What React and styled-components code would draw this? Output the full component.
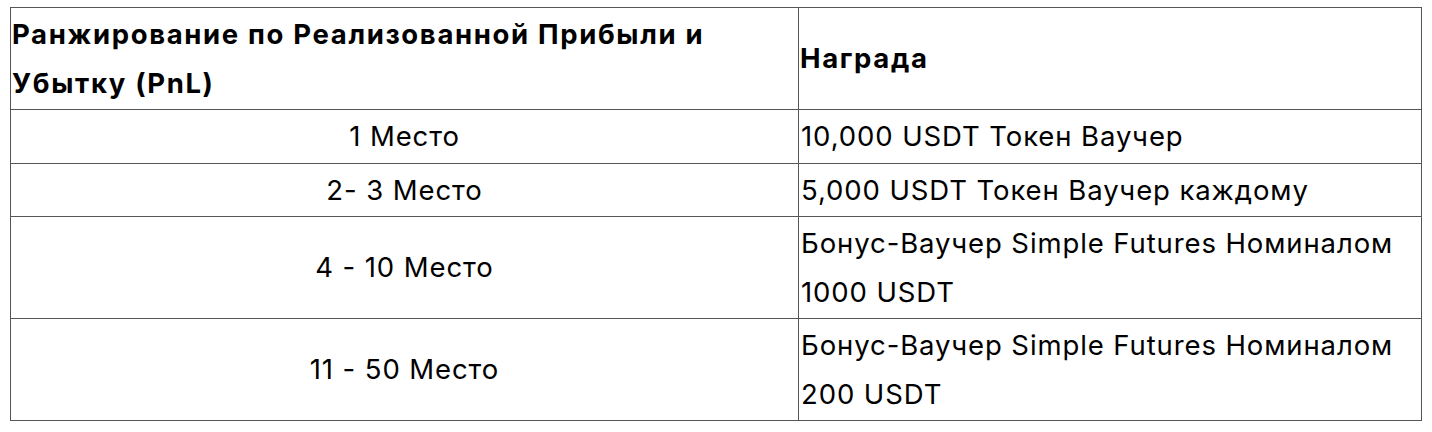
import React from "react";
import styled, { createGlobalStyle } from "styled-components";

const GlobalStyle = createGlobalStyle`
  html, body {
    margin: 0;
    padding: 0;
    background: #ffffff;
  }
  body {
    font-family: Inter, "Noto Sans", "Liberation Sans", sans-serif;
    color: #000000;
  }
`;

const rows = [
  { place: "1 Место", reward: "10,000 USDT Токен Ваучер" },
  { place: "2- 3 Место", reward: "5,000 USDT Токен Ваучер каждому" },
  { place: "4 - 10 Место", reward: "Бонус-Ваучер Simple Futures Номиналом 1000 USDT" },
  { place: "11 - 50 Место", reward: "Бонус-Ваучер Simple Futures Номиналом 200 USDT" },
];

export default function App() {
  return (
    <>
      <GlobalStyle />
      <Page>
        <Table>
          <colgroup>
            <col style={{ width: 788 }} />
            <col style={{ width: 623 }} />
          </colgroup>
          <thead>
            <tr>
              <HeadCell>Ранжирование по Реализованной Прибыли и Убытку (PnL)</HeadCell>
              <HeadCell>Награда</HeadCell>
            </tr>
          </thead>
          <tbody>
            {rows.map((row) => (
              <tr key={row.place}>
                <Cell $center>{row.place}</Cell>
                <Cell>{row.reward}</Cell>
              </tr>
            ))}
          </tbody>
        </Table>
      </Page>
    </>
  );
}

const Page = styled.div`
  padding: 7px 10px 10px 10px;
`;

const Table = styled.table`
  width: 1411px;
  border-collapse: collapse;
  table-layout: fixed;
  font-size: 27.5px;
  letter-spacing: 0.9px;
  line-height: 48.5px;
`;

const HeadCell = styled.th`
  border: 1px solid #555555;
  padding: 2px 2px 2px 1px;
  text-align: left;
  vertical-align: middle;
  font-weight: 700;
  letter-spacing: 1.65px;
`;

const Cell = styled.td`
  border: 1px solid #555555;
  padding: 2px 2px 2px 2px;
  text-align: ${(p) => (p.$center ? "center" : "left")};
  vertical-align: middle;
  font-weight: 400;
`;
